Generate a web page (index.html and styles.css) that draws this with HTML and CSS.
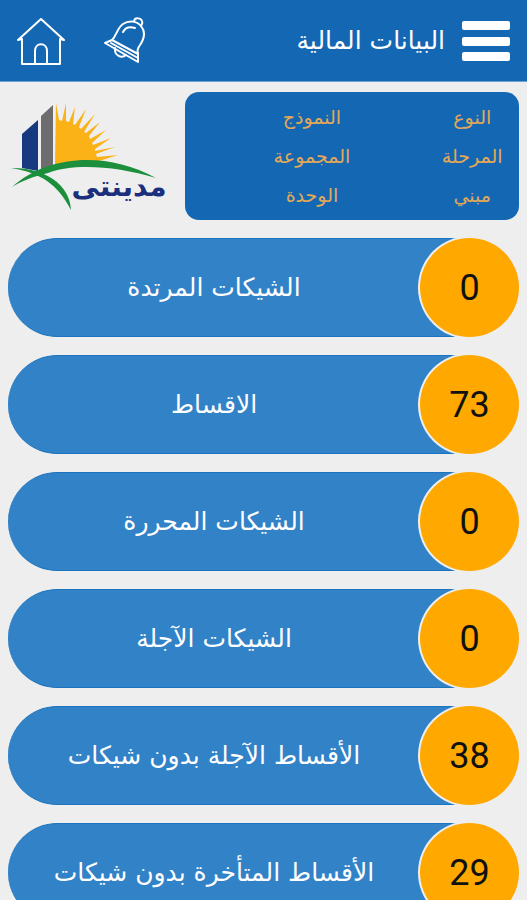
FILE: index.html
```html
<!DOCTYPE html>
<html lang="ar" dir="rtl">
<head>
  <meta charset="UTF-8"/>
  <meta name="viewport" content="width=device-width, initial-scale=1.0"/>
  <title>البيانات المالية</title>
  <link rel="stylesheet" href="styles.css">
</head>
<body>
  <header class="topbar">
    <button class="icon-btn menu-btn" aria-label="القائمة">
      <svg width="48" height="42" viewBox="0 0 48 42" fill="#fff">
        <rect x="0" y="1" width="48" height="9" rx="2"/>
        <rect x="0" y="17" width="48" height="9" rx="2"/>
        <rect x="0" y="32" width="48" height="9" rx="2"/>
      </svg>
    </button>
    <h1>البيانات المالية</h1>
    <button class="icon-btn" aria-label="التنبيهات">
      <svg width="44" height="48" viewBox="0 0 44 48" fill="none" stroke="#fff" stroke-width="2" stroke-linejoin="round" stroke-linecap="round">
        <path d="M9 23 C14 18 14 11 20 7 C26 3 34 4 38 9 C43 15 41 22 37 28 C34 32 34 34 35 36"/>
        <path d="M2 26 L9 23 L35 37 L35 45 Z"/>
        <path d="M8 26 L35 41"/>
        <path d="M12 31 C11 38 18 42 23 38"/>
        <path d="M31 4 C32 0 38 1 39 4 C40 6 39 7 38 9"/>
        <path d="M20 15 C22 11 26 9 32 11"/>
      </svg>
    </button>
    <a class="icon-btn" href="#" aria-label="الرئيسية">
      <svg width="48" height="48" viewBox="0 0 48 48" fill="none" stroke="#fff" stroke-width="2" stroke-linejoin="round" stroke-linecap="round">
        <path d="M5 22 L1 23 L24 2 L47 23 L43 22 V47 H5 Z"/>
        <path d="M18 47 V34 C18 25 30 25 30 34 V47"/>
      </svg>
    </a>
  </header>

  <main>
    <section class="summary">
      <table class="unit-card">
        <tr><th scope="row">النوع</th><td></td><th scope="row">النموذج</th><td></td></tr>
        <tr><th scope="row">المرحلة</th><td></td><th scope="row">المجموعة</th><td></td></tr>
        <tr><th scope="row">مبني</th><td></td><th scope="row">الوحدة</th><td></td></tr>
      </table>
      <svg class="logo" width="160" height="110" viewBox="0 0 160 110" role="img" aria-label="مدينتى">
        <!-- sun and rays -->
        <path fill="#fbb216" d="M47 64 L48 2 L51 19 L54 20 L58 2 L58 20 L61 21 L67 6 L65 23 L67 24 L78 8 L71 26 L73 28 L87 13 L76 31 L78 32 L92 21 L81 35 L82 38 L98 29 L84 42 L85 44 L103 37 L87 48 L87 50 L107 46 L88 53 L89 56 L110 54 L88 61 Z"/>
        <!-- towers -->
        <path fill="#17397f" d="M14 33 L30 19 V70 L14 67 Z"/>
        <path fill="#6d6d70" d="M33 15 L45 4 V67 L33 71 Z"/>
        <!-- hills -->
        <path fill="#1b8f3c" d="M4 86 C40 54 98 50 148 77 C108 65 66 62 40 72 C24 76 14 80 4 86 Z"/>
        <path fill="#1b8f3c" d="M3 67 C34 66 62 82 63 109 C50 84 34 72 3 67 Z"/>
        <text class="logo-text" x="111" y="95" text-anchor="middle">مدينتى</text>
      </svg>
    </section>

    <nav class="items">
      <a class="item" href="#"><span class="count">0</span><span class="label">الشيكات المرتدة</span></a>
      <a class="item" href="#"><span class="count">73</span><span class="label">الاقساط</span></a>
      <a class="item" href="#"><span class="count">0</span><span class="label">الشيكات المحررة</span></a>
      <a class="item" href="#"><span class="count">0</span><span class="label">الشيكات الآجلة</span></a>
      <a class="item" href="#"><span class="count">38</span><span class="label">الأقساط الآجلة بدون شيكات</span></a>
      <a class="item" href="#"><span class="count">29</span><span class="label">الأقساط المتأخرة بدون شيكات</span></a>
    </nav>
  </main>
</body>
</html>
```
FILE: styles.css
```css
:root {
  --bg: #eeeeee;
  --primary: #1468b3;
  --item: #3282c8;
  --item-edge: #1b74bd;
  --accent: #ffa800;
  --label: #e3a857;
}

* {
  box-sizing: border-box;
}

body {
  margin: 0;
  background-color: var(--bg);
  font-family: "DejaVu Sans", sans-serif;
}

.topbar {
  display: flex;
  align-items: center;
  height: 82px;
  padding: 0 17px;
  background-color: var(--primary);
  border-bottom: 1px solid #6fa3d3;
}

.topbar h1 {
  flex: 1;
  margin: 0 17px;
  color: #fff;
  font-size: 25px;
  font-weight: normal;
  line-height: 32px;
}

.icon-btn {
  display: block;
  padding: 0;
  border: none;
  background: none;
  cursor: pointer;
}

.icon-btn svg {
  display: block;
}

.icon-btn + .icon-btn {
  margin-right: 38px;
}

.summary {
  display: flex;
  align-items: center;
  justify-content: space-between;
  gap: 17px;
  padding: 10px 8px 18px;
}

.unit-card {
  flex: 1;
  height: 128px;
  padding: 6px 0;
  table-layout: fixed;
  border-spacing: 0;
  border-radius: 14px;
  background-color: var(--primary);
}

.unit-card th {
  width: 28%;
  padding: 0;
  color: var(--label);
  font-size: 19px;
  font-weight: normal;
  text-align: center;
}

.unit-card td {
  width: 24%;
  padding: 0;
}

.unit-card th + td:nth-child(2) {
  width: 20%;
}

.logo {
  flex: none;
  overflow: visible;
}

.logo-text {
  fill: #1b2f7d;
  font-size: 28px;
  font-weight: bold;
}

.items {
  display: flex;
  flex-direction: column;
  gap: 18px;
  padding: 0 8px 18px;
}

.item {
  display: flex;
  height: 99px;
  color: #fff;
  text-decoration: none;
}

.count {
  z-index: 1;
  flex: none;
  display: flex;
  align-items: center;
  justify-content: center;
  width: 99px;
  border-radius: 50%;
  background-color: var(--accent);
  box-shadow: 0 0 0 2px var(--bg);
  color: #111;
  font-family: Roboto, sans-serif;
  font-size: 36px;
}

/* the bar runs on under the round counter */
.label {
  flex: 1;
  display: flex;
  align-items: center;
  justify-content: center;
  margin-right: -50px;
  padding-right: 50px;
  border: solid var(--item-edge);
  border-width: 1px 0;
  border-radius: 50px 0 0 50px;
  background-color: var(--item);
  font-size: 25px;
  line-height: 32px;
}
```
